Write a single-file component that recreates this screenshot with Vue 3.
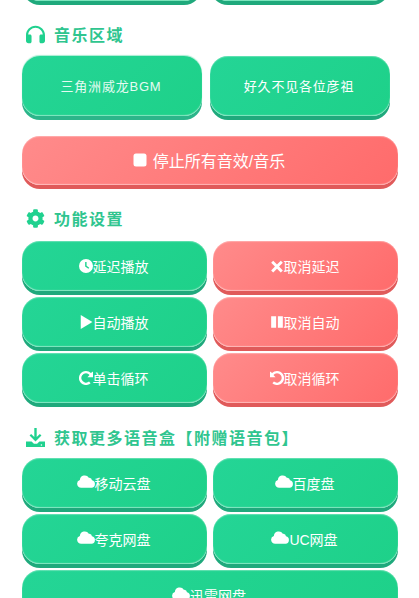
<template>
  <div class="page">
    <!-- Row scrolled off the top -->
    <div class="music-grid top-row">
      <button type="button" class="btn green music"></button>
      <button type="button" class="btn green music"></button>
    </div>

    <h2 class="title">
      <svg class="title-icon" viewBox="0 0 24 24"><path :d="icons.headphones" /></svg>
      音乐区域
    </h2>
    <div class="music-grid">
      <button type="button" class="btn green music glow">三角洲威龙BGM</button>
      <button type="button" class="btn green music">好久不见各位彦祖</button>
    </div>

    <button type="button" class="btn red stop">
      <svg class="stop-icon" viewBox="0 0 14 14"><rect x="0.5" y="0.5" width="13" height="13" rx="2.5" /></svg>
      停止所有音效/音乐
    </button>

    <h2 class="title second">
      <svg class="title-icon" viewBox="0 0 512 512"><path :d="icons.cog" /></svg>
      功能设置
    </h2>
    <div class="grid">
      <button v-for="b in settings" :key="b.label" type="button" class="btn" :class="b.color">
        <svg class="icon" viewBox="0 0 24 24"><path fill-rule="evenodd" :d="icons[b.icon]" /></svg>{{ b.label }}
      </button>
    </div>

    <h2 class="title third">
      <svg class="title-icon" viewBox="0 0 24 24"><path :d="icons.download" /></svg>
      获取更多语音盒【附赠语音包】
    </h2>
    <div class="grid">
      <button v-for="b in downloads" :key="b.label" type="button" class="btn green" :class="{ wide: b.wide }">
        <svg class="icon cloud" viewBox="0 0 24 18"><path :d="icons.cloud" /></svg>{{ b.label }}
      </button>
    </div>
  </div>
</template>

<script setup>
const icons = {
  headphones: 'M12 1C5.400 1 0 6.400 0 13v7C0 21.700 1.300 23 3 23H5c1.100 0 2-.9 2-2v-7c0-1.100-.9-2-2-2H2.800C3.300 7.200 7.200 3.500 12 3.500s8.700 3.700 9.200 8.500H19c-1.100 0-2 .9-2 2v7c0 1.100.9 2 2 2h2c1.700 0 3-1.300 3-3v-7c0-6.600-5.400-12-12-12z',
  cog: 'M487.4 315.7l-42.6-24.6c4.3-23.2 4.3-47 0-70.2l42.6-24.6c4.9-2.8 7.1-8.6 5.5-14-11.1-35.6-30-67.8-54.7-94.6-3.8-4.1-10-5.1-14.8-2.3L380.8 110c-17.9-15.4-38.5-27.3-60.8-35.1V25.8c0-5.6-3.9-10.5-9.4-11.7-36.7-8.2-74.3-7.8-109.2 0-5.5 1.2-9.4 6.1-9.4 11.7V75c-22.2 7.9-42.8 19.8-60.8 35.1L88.7 85.5c-4.9-2.8-11-1.9-14.8 2.3-24.7 26.7-43.6 58.9-54.7 94.6-1.7 5.4.6 11.2 5.5 14L67.3 221c-4.3 23.2-4.3 47 0 70.2l-42.6 24.6c-4.9 2.8-7.1 8.6-5.5 14 11.1 35.6 30 67.8 54.7 94.6 3.8 4.1 10 5.1 14.8 2.3l42.6-24.6c17.9 15.4 38.5 27.3 60.8 35.1v49.2c0 5.6 3.9 10.5 9.4 11.7 36.7 8.2 74.3 7.8 109.2 0 5.5-1.2 9.4-6.1 9.4-11.700v-49.2c22.2-7.9 42.8-19.8 60.8-35.1l42.6 24.6c4.9 2.8 11 1.9 14.8-2.3 24.7-26.7 43.6-58.9 54.7-94.6 1.5-5.5-.7-11.3-5.6-14.1zM256 336c-44.1 0-80-35.9-80-80s35.9-80 80-80 80 35.9 80 80-35.9 80-80 80z',
  download: 'M10.500 0h3v11.500l4-4 2 2L12 17 4.500 9.500l2-2 4 4zM0 17h7l3 3h4l3-3h7v7H0zm19.500 3.500a1 1 0 1 0 0 2 1 1 0 0 0 0-2z',
  clock: 'M12 0a12 12 0 1 0 0 24 12 12 0 0 0 0-24zm-1.500 5h2.500v6.500l4.600 3.400-1.500 2L10.500 13z',
  play: 'M3 0l20 12L3 24z',
  times: 'M5.500 3L12 9.500 18.500 3 22 6.500 15.500 13 22 19.500 18.500 23 12 16.500 5.500 23 2 19.500 8.500 13 2 6.500z',
  pause: 'M2 2h8.500v20H2zM13.500 2H22v20h-8.500z',
  redo: 'M24 1v9.500h-9.500l3.600-3.600A7.700 7.700 0 0 0 12 4a8 8 0 1 0 5.200 14.100l2.700 2.800A12 12 0 1 1 12 0c3.200 0 6.200 1.300 8.400 3.500z',
  undo: 'M0 1v9.500h9.500L5.900 6.900A7.700 7.700 0 0 1 12 4a8 8 0 1 1-5.200 14.100l-2.700 2.800A12 12 0 1 0 12 0C8.800 0 5.800 1.300 3.600 3.500z',
  cloud: 'M5.500 18A5.400 5.400 0 0 1 3.800 7.500 6.500 6.500 0 0 1 15.800 4.700 3.800 3.800 0 0 1 20 8a5.100 5.100 0 0 1-.5 10z',
}

const settings = [
  { label: '延迟播放', icon: 'clock', color: 'green' },
  { label: '取消延迟', icon: 'times', color: 'red' },
  { label: '自动播放', icon: 'play', color: 'green' },
  { label: '取消自动', icon: 'pause', color: 'red' },
  { label: '单击循环', icon: 'redo', color: 'green' },
  { label: '取消循环', icon: 'undo', color: 'red' },
]

const downloads = [
  { label: '移动云盘' },
  { label: '百度盘' },
  { label: '夸克网盘' },
  { label: 'UC网盘' },
  { label: '迅雷网盘', wide: true },
]
</script>

<style>
html, body { background: #fff; overflow: hidden; }
</style>

<style scoped>
.page {
  height: 598px;
  overflow: hidden;
  padding: 0 21px 0 22px;
  box-sizing: border-box;
  background: #fff;
  font-family: "Liberation Sans", "Noto Sans CJK SC", sans-serif;
}

.title {
  display: flex;
  align-items: center;
  gap: 9px;
  height: 20px;
  margin: 23px 0 12px 4px;
  font-size: 16px;
  font-weight: 700;
  letter-spacing: 1.5px;
  color: #2fc58f;
}
.title.second { margin-bottom: 13px; }
.title.third { margin: 24px 0 11px 4px; }
.title-icon { width: 19px; height: 19px; fill: #20d18f; flex: none; }

.btn {
  display: flex;
  align-items: center;
  justify-content: center;
  height: 50px;
  padding: 0 2px 0 0;
  border: none;
  border-radius: 18px;
  font-family: inherit;
  font-size: 14px;
  color: #fff;
  cursor: pointer;
}
.green {
  background: linear-gradient(135deg, #24d596, #1ed189);
  box-shadow: 0 4px 0 #1fa97c, inset 0 1px 1px rgba(255,255,255,.3), inset 0 -1px 1px rgba(255,255,255,.45);
}
.red {
  background: linear-gradient(135deg, #ff8b8b, #ff6b6b);
  box-shadow: 0 4px 0 #e05a5a, inset 0 1px 1px rgba(255,255,255,.3), inset 0 -1px 1px rgba(255,255,255,.45);
}

.music-grid {
  display: grid;
  grid-template-columns: 180px 180px;
  gap: 8px;
}
.top-row { margin: -59px 0 0; }
.music { height: 60px; padding-bottom: 2px; font-size: 13px; letter-spacing: .8px; }
.glow { color: #e4fbf2; box-shadow: 0 4px 0 #2cb58a, 0 -1px 1px rgba(32,209,143,.4), inset 0 -1px 1px rgba(255,255,255,.45); }

.stop {
  width: 100%;
  height: 49px;
  margin-top: 20px;
  padding-bottom: 2px;
  font-size: 16px;
}
.stop-icon { width: 14px; height: 14px; margin-right: 6px; fill: #fff; }

.grid {
  display: grid;
  grid-template-columns: 185px 185px;
  gap: 6px;
}
.wide { grid-column: 1 / 3; }
.icon { width: 14px; height: 14px; fill: #fff; flex: none; }
.cloud { width: 18px; height: 14px; margin-top: -4px; }
</style>
